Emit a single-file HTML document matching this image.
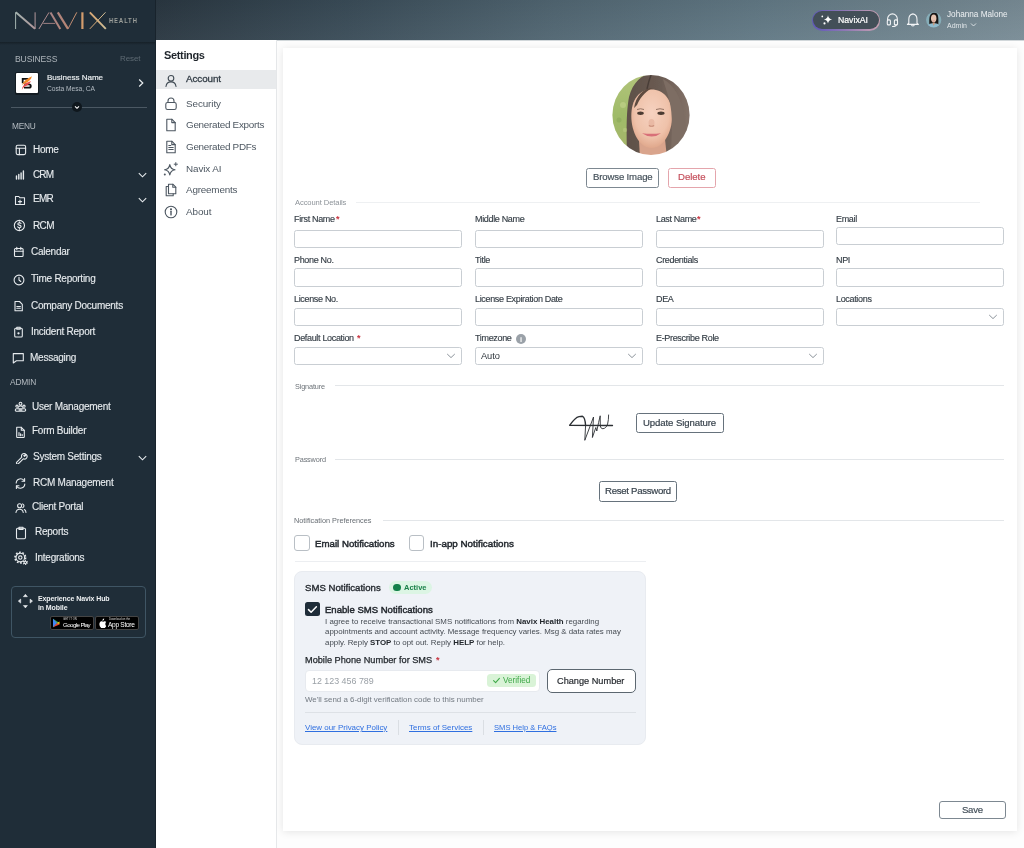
<!DOCTYPE html>
<html><head><meta charset="utf-8"><title>Settings - Account</title>
<style>
html,body{margin:0;padding:0;width:1024px;height:848px;overflow:hidden;background:#fdfdfd}
body{position:relative;font-family:"Liberation Sans",sans-serif}
.t{position:absolute;white-space:nowrap;will-change:transform;font-family:"Liberation Sans",sans-serif}
.b{position:absolute;display:block}
</style></head><body>
<div class="b" style="left:0px;top:0px;width:1024px;height:848px;background:#fdfdfd"></div>
<div class="b" style="left:0px;top:0px;width:156px;height:848px;background:#1f2d38"></div>
<div class="b" style="left:0px;top:42px;width:156px;height:3px;background:linear-gradient(#162028,#1f2d38)"></div>
<div class="b" style="left:155px;top:0px;width:1px;height:848px;background:#18232c"></div>
<svg class="b" style="left:0px;top:0px;" width="156" height="40" viewBox="0 0 156 40"><defs><linearGradient id="lg" x1="15" y1="0" x2="106" y2="0" gradientUnits="userSpaceOnUse">
<stop offset="0" stop-color="#a3b4b0"/><stop offset="0.22" stop-color="#b2979b"/><stop offset="0.4" stop-color="#a98384"/>
<stop offset="0.6" stop-color="#b98672"/><stop offset="0.74" stop-color="#d39c6c"/><stop offset="0.9" stop-color="#d8b07e"/><stop offset="1" stop-color="#cfc09a"/></linearGradient></defs><g fill="none" stroke="url(#lg)" stroke-linecap="butt">
<path d="M15.6 29V12.3" stroke-width="1"/><path d="M15.8 12.3L35 28.8" stroke-width="1.9"/><path d="M35.1 12.3V29" stroke-width="1"/>
<path d="M38.9 29L49 12.4" stroke-width="1"/><path d="M50.5 12.4L60.3 29" stroke-width="2"/><path d="M43.3 23.4H55.2" stroke-width="0.9"/>
<path d="M57.8 12.3L68 28.9" stroke-width="2.2"/><path d="M68 28.9L76.8 12.3" stroke-width="1"/>
<path d="M82.4 12.3V29" stroke-width="2.2"/>
<path d="M89.8 12.3L105.8 28.9" stroke-width="1.9"/><path d="M105.5 12.3L89.8 28.9" stroke-width="1"/>
</g></svg>
<div class="t" style="left:109.30px;top:17.95px;font-size:6.3px;line-height:6.3px;color:#9fa19c;font-weight:700;letter-spacing:1.05px;transform:scaleX(0.92);transform-origin:0 0">HEALTH</div>
<div class="t" style="left:14.50px;top:54.79px;font-size:8.6px;line-height:8.6px;color:#aeb5bb;font-weight:400;letter-spacing:-0.15px;">BUSINESS</div>
<div class="t" style="left:119.50px;top:55.30px;font-size:8px;line-height:8px;color:#5e6a73;font-weight:400;letter-spacing:-0.1px;">Reset</div>
<div class="b" style="left:15px;top:71.5px;width:24px;height:23.0px;background:#121b22;border-radius:2px"></div>
<div class="b" style="left:16px;top:73px;width:21.5px;height:20px;background:#fff;border-radius:1px"></div>
<svg class="b" style="left:16px;top:73px;" width="22" height="20" viewBox="0 0 22 20"><path d="M6.7 10.2V5.9H12.5" stroke="#111" stroke-width="1.8" fill="none"/>
<path d="M8.3 11.4H13c1.2 0 1.8.7 1.8 1.6s-.6 1.7-1.8 1.7H8" stroke="#111" stroke-width="1.8" fill="none"/>
<path d="M6.1 12.2C7.2 8.5 10.5 6 15.9 3.3 15.2 6.8 12.6 8.9 9 10.5 7.6 11.1 6.7 11.6 6.1 12.2Z" fill="#f28a28"/>
<path d="M5.9 17C6.1 12.8 8.8 10.4 14.9 8 14.2 10.8 11.8 12.2 8.8 13.4 7.4 14.2 6.4 15.5 5.9 17Z" fill="#ea4a4a"/></svg>
<div class="t" style="left:47.00px;top:74.21px;font-size:8.1px;line-height:8.1px;color:#eef1f3;font-weight:400;letter-spacing:-0.05px;-webkit-text-stroke:0.15px #eef1f3">Business Name</div>
<div class="t" style="left:47.00px;top:86.20px;font-size:6.7px;line-height:6.7px;color:#b3bbc2;font-weight:400;letter-spacing:-0.05px;">Costa Mesa, CA</div>
<svg class="b" style="left:136px;top:78px;" width="10" height="10" viewBox="0 0 10 10"><path d="M3.2 1.5L6.8 5 3.2 8.5" fill="none" stroke="#e8ecef" stroke-width="1.2"/></svg>
<div class="b" style="left:11px;top:106.5px;width:136px;height:1.5px;background:#4b5863"></div>
<div class="b" style="left:72px;top:102px;width:10px;height:10px;background:#0f171d;border-radius:50%"></div>
<svg class="b" style="left:72px;top:102px;" width="10" height="10" viewBox="0 0 10 10"><path d="M3 4.3L5 6.3 7 4.3" fill="none" stroke="#fff" stroke-width="1.1"/></svg>
<div class="t" style="left:12.30px;top:122.04px;font-size:8.3px;line-height:8.3px;color:#b4bbc1;font-weight:400;letter-spacing:-0.2px;">MENU</div>
<div class="t" style="left:33.40px;top:145.00px;font-size:10px;line-height:10px;color:#e7ebee;font-weight:400;letter-spacing:-0.25px;-webkit-text-stroke:0.12px #e7ebee">Home</div>
<div class="t" style="left:33.00px;top:169.90px;font-size:10px;line-height:10px;color:#e7ebee;font-weight:400;letter-spacing:-0.9px;-webkit-text-stroke:0.12px #e7ebee">CRM</div>
<div class="t" style="left:33.40px;top:194.10px;font-size:10px;line-height:10px;color:#e7ebee;font-weight:400;letter-spacing:-0.75px;-webkit-text-stroke:0.12px #e7ebee">EMR</div>
<div class="t" style="left:32.50px;top:220.50px;font-size:10px;line-height:10px;color:#e7ebee;font-weight:400;letter-spacing:-0.6px;-webkit-text-stroke:0.12px #e7ebee">RCM</div>
<div class="t" style="left:30.80px;top:247.30px;font-size:10px;line-height:10px;color:#e7ebee;font-weight:400;letter-spacing:-0.25px;-webkit-text-stroke:0.12px #e7ebee">Calendar</div>
<div class="t" style="left:30.80px;top:274.20px;font-size:10px;line-height:10px;color:#e7ebee;font-weight:400;letter-spacing:-0.25px;-webkit-text-stroke:0.12px #e7ebee">Time Reporting</div>
<div class="t" style="left:30.80px;top:301.00px;font-size:10px;line-height:10px;color:#e7ebee;font-weight:400;letter-spacing:-0.25px;-webkit-text-stroke:0.12px #e7ebee">Company Documents</div>
<div class="t" style="left:30.80px;top:327.10px;font-size:10px;line-height:10px;color:#e7ebee;font-weight:400;letter-spacing:-0.25px;-webkit-text-stroke:0.12px #e7ebee">Incident Report</div>
<div class="t" style="left:30.20px;top:352.90px;font-size:10px;line-height:10px;color:#e7ebee;font-weight:400;letter-spacing:-0.25px;-webkit-text-stroke:0.12px #e7ebee">Messaging</div>
<div class="t" style="left:32.00px;top:402.00px;font-size:10px;line-height:10px;color:#e7ebee;font-weight:400;letter-spacing:-0.25px;-webkit-text-stroke:0.12px #e7ebee">User Management</div>
<div class="t" style="left:32.00px;top:426.40px;font-size:10px;line-height:10px;color:#e7ebee;font-weight:400;letter-spacing:-0.25px;-webkit-text-stroke:0.12px #e7ebee">Form Builder</div>
<div class="t" style="left:32.60px;top:451.90px;font-size:10px;line-height:10px;color:#e7ebee;font-weight:400;letter-spacing:-0.25px;-webkit-text-stroke:0.12px #e7ebee">System Settings</div>
<div class="t" style="left:32.50px;top:477.70px;font-size:10px;line-height:10px;color:#e7ebee;font-weight:400;letter-spacing:-0.25px;-webkit-text-stroke:0.12px #e7ebee">RCM Management</div>
<div class="t" style="left:31.70px;top:502.30px;font-size:10px;line-height:10px;color:#e7ebee;font-weight:400;letter-spacing:-0.25px;-webkit-text-stroke:0.12px #e7ebee">Client Portal</div>
<div class="t" style="left:34.50px;top:527.40px;font-size:10px;line-height:10px;color:#e7ebee;font-weight:400;letter-spacing:-0.25px;-webkit-text-stroke:0.12px #e7ebee">Reports</div>
<div class="t" style="left:35.30px;top:553.20px;font-size:10px;line-height:10px;color:#e7ebee;font-weight:400;letter-spacing:-0.25px;-webkit-text-stroke:0.12px #e7ebee">Integrations</div>
<div class="t" style="left:10.40px;top:378.16px;font-size:8.4px;line-height:8.4px;color:#b4bbc1;font-weight:400;letter-spacing:-0.2px;">ADMIN</div>
<svg class="b" style="left:137px;top:171.2px;" width="11" height="8" viewBox="0 0 11 8"><path d="M1.8 2.2L5.5 5.8 9.2 2.2" fill="none" stroke="#e7ebee" stroke-width="1.1"/></svg>
<svg class="b" style="left:137px;top:195.8px;" width="11" height="8" viewBox="0 0 11 8"><path d="M1.8 2.2L5.5 5.8 9.2 2.2" fill="none" stroke="#e7ebee" stroke-width="1.1"/></svg>
<svg class="b" style="left:137px;top:453.5px;" width="11" height="8" viewBox="0 0 11 8"><path d="M1.8 2.2L5.5 5.8 9.2 2.2" fill="none" stroke="#e7ebee" stroke-width="1.1"/></svg>
<svg class="b" style="left:15px;top:144px;" width="12" height="12" viewBox="0 0 12 12"><g fill="none" stroke="#e7ebee" stroke-width="1.1" stroke-linecap="round" stroke-linejoin="round"><rect x="1.2" y="1.2" width="9.4" height="9.4" rx="1.5"/><path d="M1.2 4.3h9.4M4.4 4.3v6.3"/></g></svg>
<svg class="b" style="left:15px;top:169px;" width="11" height="11" viewBox="0 0 11 11"><g fill="none" stroke="#e7ebee" stroke-width="1.1" stroke-linecap="round" stroke-linejoin="round"><path d="M1.5 10V7M3.8 10V5.5M6.1 10V4M8.4 10V2" stroke-width="1.4"/></g></svg>
<svg class="b" style="left:14px;top:194px;" width="12" height="12" viewBox="0 0 12 12"><g fill="none" stroke="#e7ebee" stroke-width="1.1" stroke-linecap="round" stroke-linejoin="round"><path d="M1.5 2.5h3.3l1.2 1.3h4.5v6.7H1.5z"/><path d="M6 6v3.2M4.4 7.6h3.2"/></g></svg>
<svg class="b" style="left:13px;top:219px;" width="13" height="13" viewBox="0 0 13 13"><g fill="none" stroke="#e7ebee" stroke-width="1.1" stroke-linecap="round" stroke-linejoin="round"><circle cx="6.4" cy="6.5" r="5.1"/><path d="M8 4.6c-.3-.6-.9-.9-1.6-.9-.9 0-1.6.5-1.6 1.2 0 1.6 3.3.9 3.3 2.6 0 .7-.7 1.2-1.7 1.2-.8 0-1.4-.3-1.7-.9M6.4 2.9v1M6.4 9.2v1"/></g></svg>
<svg class="b" style="left:13px;top:246px;" width="12" height="12" viewBox="0 0 12 12"><g fill="none" stroke="#e7ebee" stroke-width="1.1" stroke-linecap="round" stroke-linejoin="round"><rect x="1.5" y="2.5" width="8.6" height="8" rx="1"/><path d="M1.5 5.2h8.6M3.8 1.2v2.3M7.8 1.2v2.3"/></g></svg>
<svg class="b" style="left:12.5px;top:274px;" width="12" height="12" viewBox="0 0 12 12"><g fill="none" stroke="#e7ebee" stroke-width="1.1" stroke-linecap="round" stroke-linejoin="round"><circle cx="6" cy="6" r="4.9"/><path d="M6 3.2V6l1.8 1.5"/></g></svg>
<svg class="b" style="left:13px;top:300px;" width="11" height="12" viewBox="0 0 11 12"><g fill="none" stroke="#e7ebee" stroke-width="1.1" stroke-linecap="round" stroke-linejoin="round"><path d="M2 1.5h4.5l2.8 2.8v6.5H2z"/><path d="M3.8 6.5h3.6M3.8 8.2h3.6"/></g></svg>
<svg class="b" style="left:13px;top:326px;" width="11" height="12" viewBox="0 0 11 12"><g fill="none" stroke="#e7ebee" stroke-width="1.1" stroke-linecap="round" stroke-linejoin="round"><rect x="1.7" y="2.3" width="7.6" height="8.7" rx="1"/><path d="M3.8 1.3h3.4v2H3.8z"/><circle cx="5.5" cy="7.3" r=".6" fill="#e7ebee"/></g></svg>
<svg class="b" style="left:11.5px;top:352px;" width="13" height="12" viewBox="0 0 13 12"><g fill="none" stroke="#e7ebee" stroke-width="1.1" stroke-linecap="round" stroke-linejoin="round"><path d="M1.3 1.6h10v7.2H4.4L1.3 11z"/></g></svg>
<svg class="b" style="left:14px;top:401px;" width="13" height="12" viewBox="0 0 13 12"><g fill="none" stroke="#e7ebee" stroke-width="1.1" stroke-linecap="round" stroke-linejoin="round"><circle cx="6.5" cy="2.7" r="1.4"/><path d="M4.3 6.2c.5-.9 1.2-1.3 2.2-1.3s1.7.4 2.2 1.3"/><circle cx="3" cy="5.2" r="1.1"/><circle cx="10" cy="5.2" r="1.1"/><rect x="1.3" y="7.7" width="10.4" height="2.6" rx="1.2"/><path d="M5.2 9h2.6" stroke-width="1.6"/></g></svg>
<svg class="b" style="left:15px;top:426px;" width="11" height="12" viewBox="0 0 11 12"><g fill="none" stroke="#e7ebee" stroke-width="1.1" stroke-linecap="round" stroke-linejoin="round"><path d="M1.7 1.3h4.6l3 3v6.5c0 .4-.3.7-.7.7H2.4c-.4 0-.7-.3-.7-.7z"/><path d="M6.3 1.3v3h3"/><path d="M4 6.5v3.3M5.6 7.7v2.1M7.2 8.6v1.2"/></g></svg>
<svg class="b" style="left:14.5px;top:452px;" width="13" height="12" viewBox="0 0 13 12"><g fill="none" stroke="#e7ebee" stroke-width="1.1" stroke-linecap="round" stroke-linejoin="round"><path d="M11 2.5c-.9-1.1-2.6-1.3-3.7-.3-.8.8-1 2-.5 3L1.8 10.1c-.5.5-.5 1.2 0 1.6.4.4 1.1.4 1.6 0l4.9-4.9c1 .5 2.2.3 3-.5 1-1 .9-2.6 0-3.6L9.6 4.4 8.8 3.6z"/></g></svg>
<svg class="b" style="left:14px;top:477px;" width="13" height="13" viewBox="0 0 13 13"><g fill="none" stroke="#e7ebee" stroke-width="1.1" stroke-linecap="round" stroke-linejoin="round"><path d="M2.2 6A4.4 4.4 0 0 1 10.4 4M10.8 7A4.4 4.4 0 0 1 2.6 9"/><path d="M10.6 1.6v2.6H8M2.4 11.4V8.8H5"/></g></svg>
<svg class="b" style="left:15px;top:502px;" width="12" height="12" viewBox="0 0 12 12"><g fill="none" stroke="#e7ebee" stroke-width="1.1" stroke-linecap="round" stroke-linejoin="round"><circle cx="4.6" cy="3.8" r="2"/><path d="M1 10.5c.2-2 1.6-3.3 3.6-3.3s3.4 1.3 3.6 3.3"/><path d="M7.6 1.9a2 2 0 0 1 0 3.8M9.4 7.6c1 .5 1.5 1.6 1.6 2.9"/></g></svg>
<svg class="b" style="left:15px;top:526px;" width="12" height="14" viewBox="0 0 12 14"><g fill="none" stroke="#e7ebee" stroke-width="1.1" stroke-linecap="round" stroke-linejoin="round"><rect x="1.5" y="2.3" width="9" height="10.5" rx="1.2"/><path d="M4 1.2h4v2.2H4z"/></g></svg>
<svg class="b" style="left:14px;top:551px;" width="15" height="15" viewBox="0 0 15 15"><g fill="none" stroke="#e7ebee" stroke-width="1.1" stroke-linecap="round" stroke-linejoin="round"><circle cx="6.3" cy="6.6" r="4.3"/><circle cx="6.3" cy="6.6" r="5.3" stroke-width="1.6" stroke-dasharray="1.7 1.6" stroke-linecap="butt"/><circle cx="6.3" cy="6.6" r="1.7"/><circle cx="11.3" cy="11.5" r="2.4" fill="#1f2d38" stroke="none"/><circle cx="11.3" cy="11.5" r="1.2"/><circle cx="11.3" cy="11.5" r="2" stroke-width="1.2" stroke-dasharray="1 1" stroke-linecap="butt"/></g></svg>
<div class="b" style="left:10.5px;top:586px;width:135.5px;height:52px;border:1px solid #3f5564;border-radius:4px;box-sizing:border-box"></div>
<svg class="b" style="left:17px;top:593px;" width="16" height="16" viewBox="0 0 16 16"><g fill="#e7ebee" stroke="#e7ebee" stroke-width="0.6" stroke-linejoin="round"><path d="M8.4 1.3l2 2.4H6.4z"/><path d="M8.4 14.9l2-2.4H6.4z"/><path d="M1.3 8.1l2.4-2v4z"/><path d="M15.5 8.1l-2.4-2v4z"/></g></svg>
<div class="t" style="left:37.50px;top:594.95px;font-size:7px;line-height:7px;color:#eef1f3;font-weight:700;letter-spacing:-0.1px;">Experience Navix Hub</div>
<div class="t" style="left:37.50px;top:603.75px;font-size:7px;line-height:7px;color:#eef1f3;font-weight:700;letter-spacing:-0.1px;">in Mobile</div>
<div class="b" style="left:49.5px;top:616px;width:44.0px;height:14px;background:#000;border:0.5px solid #444;border-radius:2px;box-sizing:border-box"></div>
<div class="b" style="left:95px;top:616px;width:44px;height:14px;background:#000;border:0.5px solid #444;border-radius:2px;box-sizing:border-box"></div>
<svg class="b" style="left:52px;top:618px;" width="9" height="10" viewBox="0 0 9 10"><path d="M1 .8l6.5 4.2L1 9.2z" fill="#34a853"/><path d="M1 .8l4 4.2-4 4.2z" fill="#4285f4"/><path d="M1 9.2l4-4.2 2.5 1.6z" fill="#ea4335"/><path d="M5 5l2.5-1.6L7.5 6.6z" fill="#fbbc04"/></svg>
<div class="t" style="left:63.00px;top:618.02px;font-size:2.8px;line-height:2.8px;color:#ddd;font-weight:400;letter-spacing:0px;">GET IT ON</div>
<div class="t" style="left:62.60px;top:622.03px;font-size:6.2px;line-height:6.2px;color:#fff;font-weight:400;letter-spacing:-0.6px;">Google Play</div>
<svg class="b" style="left:98px;top:618px;" width="9" height="10" viewBox="0 0 9 10"><path d="M6.2 .6c-.6 0-1.2.4-1.5.9-.3.4-.4.9-.3 1.3.6 0 1.1-.3 1.4-.8.3-.4.4-.9.4-1.4zM7.4 5.6c0-1 .8-1.5.9-1.5-.5-.7-1.2-.8-1.5-.8-.6-.1-1.2.4-1.6.4-.3 0-.8-.4-1.4-.4C3 3.3 2.2 3.8 1.8 4.6c-.8 1.4-.2 3.4.6 4.5.4.5.8 1.1 1.3 1.1s.7-.3 1.3-.3.8.3 1.3.3c.6 0 .9-.5 1.3-1.1.4-.6.6-1.2.6-1.2s-.8-.4-.8-1.4z" fill="#fff"/></svg>
<div class="t" style="left:108.50px;top:618.02px;font-size:2.8px;line-height:2.8px;color:#ddd;font-weight:400;letter-spacing:0px;">Download on the</div>
<div class="t" style="left:108.00px;top:621.69px;font-size:6.6px;line-height:6.6px;color:#fff;font-weight:400;letter-spacing:-0.3px;">App Store</div>
<div class="b" style="left:156px;top:0px;width:868px;height:40px;background:linear-gradient(180deg,rgba(0,0,0,0.05),rgba(255,255,255,0.035)),linear-gradient(90deg,#2a3741 0%,#3a4c58 22%,#516672 46%,#627985 70%,#71858f 90%,#798c96 100%)"></div>
<div class="b" style="left:156px;top:40px;width:868px;height:1px;background:rgba(110,130,140,0.3)"></div>
<div class="b" style="left:812px;top:10px;width:68px;height:20.5px;border-radius:11px;background:linear-gradient(90deg,#5e57b8,#8f79b4 50%,#c9a2b2);padding:1px;box-sizing:border-box"></div>
<div class="b" style="left:813.2px;top:11.2px;width:65.59999999999991px;height:18.1px;border-radius:10px;background:#434f58"></div>
<svg class="b" style="left:819px;top:13px;" width="15" height="14" viewBox="0 0 15 14"><path d="M9 2.3c.45 2.6 1.5 3.65 4.1 4.1-2.6.45-3.65 1.5-4.1 4.1-.45-2.6-1.5-3.65-4.1-4.1 2.6-.45 3.65-1.5 4.1-4.1z" fill="#fff"/><circle cx="3.3" cy="3.4" r=".85" fill="#fff"/><circle cx="5.5" cy="10.4" r="1.05" fill="#fff"/></svg>
<div class="t" style="left:837.70px;top:15.60px;font-size:8.7px;line-height:8.7px;color:#ffffff;font-weight:400;letter-spacing:0px;-webkit-text-stroke:0.2px #fff">NavixAI</div>
<svg class="b" style="left:885px;top:12px;" width="15" height="16" viewBox="0 0 15 16"><g fill="none" stroke="#f2f4f6" stroke-width="1.1" stroke-linecap="round"><path d="M2.6 8.6V6.7a4.85 4.85 0 0 1 9.7 0v1.9"/><rect x="2.3" y="7.9" width="3.1" height="5" rx="1"/><rect x="9.4" y="7.9" width="3.1" height="5" rx="1"/><path d="M11.2 12.9c0 1-.9 1.6-3.7 1.6"/></g></svg>
<svg class="b" style="left:905px;top:12px;" width="16" height="16" viewBox="0 0 16 16"><g fill="none" stroke="#f2f4f6" stroke-width="1.1" stroke-linejoin="round"><path d="M3.8 11.2V7.4C3.8 4.6 5.6 2.3 7.9 1.9 10.2 2.3 12 4.6 12 7.4v3.8l1.4 1.2H2.4z"/><path d="M6.5 12.6a1.4 1.4 0 0 0 2.8 0"/></g></svg>
<svg class="b" style="left:925.5px;top:12.2px;" width="16" height="16" viewBox="0 0 16 16"><defs><clipPath id="ua"><circle cx="7.7" cy="7.9" r="7.6"/></clipPath><filter id="ub"><feGaussianBlur stdDeviation="0.35"/></filter></defs><g clip-path="url(#ua)"><g filter="url(#ub)"><rect x="-1" y="-1" width="18" height="18" fill="#86adb8"/><path d="M3.5 14C3.2 9 3 4 5 2 6.5 0.4 9 0.3 10.6 1.3 12.5 2.8 12.6 7 12.3 14z" fill="#191513"/><path d="M0 16.5C1 12.5 4 11.2 7.7 11.2s6.7 1.3 7.7 5.3z" fill="#8fbcd0"/><path d="M6.3 10.5L7.7 14 9.2 10.5z" fill="#c99a80"/><ellipse cx="7.7" cy="6.3" rx="2.7" ry="3.9" fill="#e6c3b0"/><path d="M6.8 8.8q.9.5 1.8 0" stroke="#c77" stroke-width=".6" fill="none"/></g></g></svg>
<div class="t" style="left:947.00px;top:11.13px;font-size:8.2px;line-height:8.2px;color:#eef1f3;font-weight:400;letter-spacing:0px;">Johanna Malone</div>
<div class="t" style="left:947.00px;top:21.65px;font-size:7px;line-height:7px;color:#e2e7ea;font-weight:400;letter-spacing:0px;">Admin</div>
<svg class="b" style="left:969px;top:22px;" width="9" height="6" viewBox="0 0 9 6"><path d="M2 1.5l2.5 2.5L7 1.5" fill="none" stroke="#e2e7ea" stroke-width="0.9"/></svg>
<div class="b" style="left:156px;top:40px;width:120px;height:808px;background:#fff"></div>
<div class="b" style="left:275.5px;top:40px;width:1.5px;height:808px;background:#e6e8ea"></div>
<div class="t" style="left:164.20px;top:49.75px;font-size:11px;line-height:11px;color:#1f252b;font-weight:700;letter-spacing:-0.35px;">Settings</div>
<div class="b" style="left:156px;top:70px;width:119.5px;height:19px;background:#e8eaec"></div>
<svg class="b" style="left:164px;top:74px;" width="14" height="14" viewBox="0 0 14 14"><g fill="none" stroke="#3f4a53" stroke-width="1.1" stroke-linecap="round" stroke-linejoin="round"><circle cx="7" cy="4.3" r="2.8"/><path d="M2 12.5c.4-3 2.4-4.6 5-4.6s4.6 1.6 5 4.6"/></g></svg>
<div class="t" style="left:186.00px;top:74.48px;font-size:9.9px;line-height:9.9px;color:#333d46;font-weight:400;letter-spacing:-0.1px;-webkit-text-stroke:0.3px #333d46">Account</div>
<svg class="b" style="left:164px;top:96px;" width="14" height="15" viewBox="0 0 14 15"><g fill="none" stroke="#4d5761" stroke-width="1.1" stroke-linecap="round" stroke-linejoin="round"><rect x="1.8" y="6.5" width="10.4" height="7" rx="1.8"/><path d="M4 6.5V5a3 3 0 0 1 6 0v1.5"/></g></svg>
<div class="t" style="left:185.75px;top:98.68px;font-size:9.9px;line-height:9.9px;color:#4d5761;font-weight:400;letter-spacing:-0.1px;">Security</div>
<svg class="b" style="left:164px;top:118px;" width="14" height="14" viewBox="0 0 14 14"><g fill="none" stroke="#4d5761" stroke-width="1.1" stroke-linecap="round" stroke-linejoin="round"><path d="M2.8 1.2h5l3.4 3.4v8.2H2.8z"/><path d="M7.8 1.2v3.4h3.4"/></g></svg>
<div class="t" style="left:185.75px;top:120.48px;font-size:9.9px;line-height:9.9px;color:#4d5761;font-weight:400;letter-spacing:-0.28px;">Generated Exports</div>
<svg class="b" style="left:164px;top:140px;" width="14" height="14" viewBox="0 0 14 14"><g fill="none" stroke="#4d5761" stroke-width="1.1" stroke-linecap="round" stroke-linejoin="round"><path d="M2.8 1.2h5l3.4 3.4v8.2H2.8z"/><path d="M7.8 1.2v3.4h3.4M4.8 7.5h4.4M4.8 9.5h4.4M4.8 5.5h2"/></g></svg>
<div class="t" style="left:185.75px;top:141.99px;font-size:9.9px;line-height:9.9px;color:#4d5761;font-weight:400;letter-spacing:-0.28px;">Generated PDFs</div>
<svg class="b" style="left:163px;top:161px;" width="16" height="16" viewBox="0 0 16 16"><g fill="none" stroke="#4d5761" stroke-width="1.1" stroke-linecap="round" stroke-linejoin="round"><path d="M6.8 3.6c.55 3.3 1.9 4.7 5.2 5.2-3.3.55-4.65 1.9-5.2 5.2-.55-3.3-1.9-4.65-5.2-5.2 3.3-.5 4.65-1.9 5.2-5.2z" stroke-width="1.15"/><path d="M12.8 1.6v3.2M11.2 3.2h3.2" stroke-width="1"/><circle cx="1.8" cy="13.6" r=".45" fill="#4d5761"/></g></svg>
<div class="t" style="left:185.75px;top:163.78px;font-size:9.9px;line-height:9.9px;color:#4d5761;font-weight:400;letter-spacing:-0.1px;">Navix AI</div>
<svg class="b" style="left:164px;top:183px;" width="14" height="14" viewBox="0 0 14 14"><g fill="none" stroke="#4d5761" stroke-width="1.1" stroke-linecap="round" stroke-linejoin="round"><path d="M4.5 1.2h4.3l3 3v6.6H4.5z"/><path d="M8.8 1.2v3h3"/><path d="M4.5 3.5H2.2v9.3h7v-2"/></g></svg>
<div class="t" style="left:185.75px;top:185.49px;font-size:9.9px;line-height:9.9px;color:#4d5761;font-weight:400;letter-spacing:-0.2px;">Agreements</div>
<svg class="b" style="left:164px;top:205px;" width="14" height="14" viewBox="0 0 14 14"><g fill="none" stroke="#4d5761" stroke-width="1.1" stroke-linecap="round" stroke-linejoin="round"><circle cx="7" cy="7" r="5.8"/><path d="M7 6.3v3.6" stroke-width="1.4"/><circle cx="7" cy="4.3" r=".5" fill="#4d5761"/></g></svg>
<div class="t" style="left:185.75px;top:207.28px;font-size:9.9px;line-height:9.9px;color:#4d5761;font-weight:400;letter-spacing:-0.1px;">About</div>
<div class="b" style="left:283px;top:48px;width:734px;height:783px;background:#fff;box-shadow:0 1px 8px rgba(0,0,0,0.10)"></div>
<svg class="b" style="left:611px;top:75px;" width="80" height="81" viewBox="0 0 80 81"><defs><clipPath id="av"><ellipse cx="40" cy="40" rx="38.6" ry="40"/></clipPath>
<linearGradient id="bgg" x1="0" y1="0" x2="0" y2="1"><stop offset="0" stop-color="#b3c47c"/><stop offset="0.5" stop-color="#9fbb68"/><stop offset="1" stop-color="#a8b46c"/></linearGradient>
<linearGradient id="hr" x1="0" y1="0" x2="1" y2="0"><stop offset="0" stop-color="#5e5048"/><stop offset="0.5" stop-color="#6a5b52"/><stop offset="1" stop-color="#85746a"/></linearGradient>
<radialGradient id="sk" cx="0.5" cy="0.4" r="0.6"><stop offset="0" stop-color="#f6d2c0"/><stop offset="0.7" stop-color="#efc2aa"/><stop offset="1" stop-color="#e0a88c"/></radialGradient>
<filter id="sf"><feGaussianBlur stdDeviation="0.5"/></filter></defs>
<g clip-path="url(#av)"><g filter="url(#sf)">
<rect x="-2" y="-2" width="84" height="85" fill="url(#bgg)"/>
<path d="M16 83C15.5 60 15 38 18 22 22 7 31 -1 41 -1 60 -1 82 4 82 18V83z" fill="url(#hr)"/>
<path d="M28 66L29 83H56L54 64z" fill="#d9a48c"/>
<path d="M20.3 41C20.3 24 28.5 14.5 40.5 14.5 52.5 14.5 61.2 24 61.2 41 61.2 57 52.5 73 40.5 73 28.5 73 20.3 57 20.3 41Z" fill="url(#sk)"/>
<path d="M52 4C63 10 70 22 73 40 75 55 77 70 82 83H60C60 62 63 42 58 24 56 16 53 9 52 4Z" fill="#7d6d63"/><path d="M40 0C38 5 37 9 36 14" stroke="#4a3e38" stroke-width="1.5" fill="none"/><circle cx="12" cy="30" r="3" fill="#c5d48e" opacity=".6"/><circle cx="8" cy="45" r="2.5" fill="#8aa858" opacity=".6"/><circle cx="14" cy="55" r="2.2" fill="#c0cf88" opacity=".5"/>
<path d="M23 33C25 21 32 13 42 13 36 15 30 21 26 30z" fill="#5e4c40"/>
<path d="M26 34.5q3.5-1.5 7 0M45 34.5q4-1.5 8 0" stroke="#8a6a5a" stroke-width="0.9" fill="none"/>
<ellipse cx="29.5" cy="38.3" rx="3.3" ry="1.7" fill="#4b3a30"/>
<ellipse cx="50" cy="38.3" rx="3.6" ry="1.7" fill="#4b3a30"/>
<ellipse cx="40.5" cy="48" rx="3" ry="4" fill="#e2ae98" opacity=".6"/><path d="M37.8 50.5q2.7 1.6 5.4 0" stroke="#c98e7a" stroke-width="1.1" fill="none"/>
<path d="M31 58.2Q40.5 59.5 50 58.2Q41 65 31 58.2Z" fill="#d86f78"/>
</g></g></svg>
<div class="b" style="left:586px;top:168px;width:73px;height:20px;border:1px solid #7d8891;border-radius:2.5px;box-sizing:border-box;background:#fff"></div>
<div class="t" style="left:592.90px;top:172.44px;font-size:9.6px;line-height:9.6px;color:#44505a;font-weight:400;letter-spacing:-0.15px;-webkit-text-stroke:0.18px #44505a">Browse Image</div>
<div class="b" style="left:668px;top:168px;width:47.5px;height:20px;border:1px solid #e4a5ac;border-radius:2.5px;box-sizing:border-box;background:#fff"></div>
<div class="t" style="left:677.80px;top:172.44px;font-size:9.6px;line-height:9.6px;color:#c44e5b;font-weight:400;letter-spacing:-0.05px;-webkit-text-stroke:0.18px #c44e5b">Delete</div>
<div class="t" style="left:294.60px;top:198.84px;font-size:7.6px;line-height:7.6px;color:#8d9399;font-weight:400;letter-spacing:-0.1px;">Account Details</div>
<div class="b" style="left:356px;top:202px;width:624px;height:1px;background:#eef0f2"></div>
<div class="t" style="left:294.30px;top:215.05px;font-size:9px;line-height:9px;color:#353e46;font-weight:400;letter-spacing:-0.33px;-webkit-text-stroke:0.15px #353e46">First Name</div>
<div class="t" style="left:335.60px;top:215.05px;font-size:9px;line-height:9px;color:#c8333f;font-weight:700;letter-spacing:0px;">*</div>
<div class="b" style="left:294.3px;top:229.7px;width:168.0px;height:18.30000000000001px;border:1px solid #c9ced3;border-radius:2.5px;box-sizing:border-box;background:#fff"></div>
<div class="t" style="left:475.30px;top:215.05px;font-size:9px;line-height:9px;color:#353e46;font-weight:400;letter-spacing:-0.33px;-webkit-text-stroke:0.15px #353e46">Middle Name</div>
<div class="b" style="left:475.3px;top:229.7px;width:167.99999999999994px;height:18.30000000000001px;border:1px solid #c9ced3;border-radius:2.5px;box-sizing:border-box;background:#fff"></div>
<div class="t" style="left:655.50px;top:215.05px;font-size:9px;line-height:9px;color:#353e46;font-weight:400;letter-spacing:-0.33px;-webkit-text-stroke:0.15px #353e46">Last Name</div>
<div class="t" style="left:696.50px;top:215.05px;font-size:9px;line-height:9px;color:#c8333f;font-weight:700;letter-spacing:0px;">*</div>
<div class="b" style="left:655.5px;top:229.7px;width:168.0px;height:18.30000000000001px;border:1px solid #c9ced3;border-radius:2.5px;box-sizing:border-box;background:#fff"></div>
<div class="t" style="left:836.20px;top:215.05px;font-size:9px;line-height:9px;color:#353e46;font-weight:400;letter-spacing:-0.33px;-webkit-text-stroke:0.15px #353e46">Email</div>
<div class="b" style="left:836.2px;top:227.3px;width:168.0px;height:18.19999999999999px;border:1px solid #c9ced3;border-radius:2.5px;box-sizing:border-box;background:#fff"></div>
<div class="t" style="left:294.30px;top:256.25px;font-size:9px;line-height:9px;color:#353e46;font-weight:400;letter-spacing:-0.33px;-webkit-text-stroke:0.15px #353e46">Phone No.</div>
<div class="b" style="left:294.3px;top:268.3px;width:168.0px;height:18.399999999999977px;border:1px solid #c9ced3;border-radius:2.5px;box-sizing:border-box;background:#fff"></div>
<div class="t" style="left:475.30px;top:256.25px;font-size:9px;line-height:9px;color:#353e46;font-weight:400;letter-spacing:-0.33px;-webkit-text-stroke:0.15px #353e46">Title</div>
<div class="b" style="left:475.3px;top:268.3px;width:167.99999999999994px;height:18.399999999999977px;border:1px solid #c9ced3;border-radius:2.5px;box-sizing:border-box;background:#fff"></div>
<div class="t" style="left:655.50px;top:256.25px;font-size:9px;line-height:9px;color:#353e46;font-weight:400;letter-spacing:-0.33px;-webkit-text-stroke:0.15px #353e46">Credentials</div>
<div class="b" style="left:655.5px;top:268.3px;width:168.0px;height:18.399999999999977px;border:1px solid #c9ced3;border-radius:2.5px;box-sizing:border-box;background:#fff"></div>
<div class="t" style="left:836.20px;top:256.25px;font-size:9px;line-height:9px;color:#353e46;font-weight:400;letter-spacing:-0.33px;-webkit-text-stroke:0.15px #353e46">NPI</div>
<div class="b" style="left:836.2px;top:268.3px;width:168.0px;height:18.399999999999977px;border:1px solid #c9ced3;border-radius:2.5px;box-sizing:border-box;background:#fff"></div>
<div class="t" style="left:294.30px;top:295.05px;font-size:9px;line-height:9px;color:#353e46;font-weight:400;letter-spacing:-0.33px;-webkit-text-stroke:0.15px #353e46">License No.</div>
<div class="b" style="left:294.3px;top:307.5px;width:168.0px;height:18.5px;border:1px solid #c9ced3;border-radius:2.5px;box-sizing:border-box;background:#fff"></div>
<div class="t" style="left:475.30px;top:295.05px;font-size:9px;line-height:9px;color:#353e46;font-weight:400;letter-spacing:-0.33px;-webkit-text-stroke:0.15px #353e46">License Expiration Date</div>
<div class="b" style="left:475.3px;top:307.5px;width:167.99999999999994px;height:18.5px;border:1px solid #c9ced3;border-radius:2.5px;box-sizing:border-box;background:#fff"></div>
<div class="t" style="left:655.50px;top:295.05px;font-size:9px;line-height:9px;color:#353e46;font-weight:400;letter-spacing:-0.33px;-webkit-text-stroke:0.15px #353e46">DEA</div>
<div class="b" style="left:655.5px;top:307.5px;width:168.0px;height:18.5px;border:1px solid #c9ced3;border-radius:2.5px;box-sizing:border-box;background:#fff"></div>
<div class="t" style="left:836.20px;top:295.05px;font-size:9px;line-height:9px;color:#353e46;font-weight:400;letter-spacing:-0.33px;-webkit-text-stroke:0.15px #353e46">Locations</div>
<div class="b" style="left:836.2px;top:307.5px;width:168.0px;height:18.5px;border:1px solid #c9ced3;border-radius:2.5px;box-sizing:border-box;background:#fff"></div>
<svg class="b" style="left:988.2px;top:313.75px;" width="10" height="6" viewBox="0 0 10 6"><path d="M1.2 1L5 4.6 8.8 1" fill="none" stroke="#7f878e" stroke-width="0.9"/></svg>
<div class="t" style="left:294.30px;top:333.95px;font-size:9px;line-height:9px;color:#353e46;font-weight:400;letter-spacing:-0.33px;-webkit-text-stroke:0.15px #353e46">Default Location</div>
<div class="t" style="left:356.80px;top:333.95px;font-size:9px;line-height:9px;color:#c8333f;font-weight:700;letter-spacing:0px;">*</div>
<div class="b" style="left:294.3px;top:347px;width:168.0px;height:18px;border:1px solid #c9ced3;border-radius:2.5px;box-sizing:border-box;background:#fff"></div>
<svg class="b" style="left:446.3px;top:353.0px;" width="10" height="6" viewBox="0 0 10 6"><path d="M1.2 1L5 4.6 8.8 1" fill="none" stroke="#7f878e" stroke-width="0.9"/></svg>
<div class="t" style="left:475.30px;top:333.95px;font-size:9px;line-height:9px;color:#353e46;font-weight:400;letter-spacing:-0.33px;-webkit-text-stroke:0.15px #353e46">Timezone</div>
<div class="b" style="left:515.8px;top:333.8px;width:10.5px;height:10.5px;background:#9aa1a8;border-radius:50%"></div>
<div class="t" style="left:520.10px;top:336.03px;font-size:7.5px;line-height:7.5px;color:#fff;font-weight:700;letter-spacing:0px;">i</div>
<div class="b" style="left:475.3px;top:347px;width:167.99999999999994px;height:18px;border:1px solid #c9ced3;border-radius:2.5px;box-sizing:border-box;background:#fff"></div>
<svg class="b" style="left:627.3px;top:353.0px;" width="10" height="6" viewBox="0 0 10 6"><path d="M1.2 1L5 4.6 8.8 1" fill="none" stroke="#7f878e" stroke-width="0.9"/></svg>
<div class="t" style="left:481.00px;top:351.70px;font-size:9.3px;line-height:9.3px;color:#2f363d;font-weight:400;letter-spacing:-0.1px;">Auto</div>
<div class="t" style="left:655.50px;top:333.95px;font-size:9px;line-height:9px;color:#353e46;font-weight:400;letter-spacing:-0.33px;-webkit-text-stroke:0.15px #353e46">E-Prescribe Role</div>
<div class="b" style="left:655.5px;top:347px;width:168.0px;height:18px;border:1px solid #c9ced3;border-radius:2.5px;box-sizing:border-box;background:#fff"></div>
<svg class="b" style="left:807.5px;top:353.0px;" width="10" height="6" viewBox="0 0 10 6"><path d="M1.2 1L5 4.6 8.8 1" fill="none" stroke="#7f878e" stroke-width="0.9"/></svg>
<div class="t" style="left:294.70px;top:382.60px;font-size:7.3px;line-height:7.3px;color:#6d7379;font-weight:400;letter-spacing:-0.15px;">Signature</div>
<div class="b" style="left:335px;top:384.5px;width:669px;height:1.0px;background:#e3e6e9"></div>
<svg class="b" style="left:564px;top:410px;" width="54" height="36" viewBox="0 0 54 36"><g fill="none" stroke="#2b2f33" stroke-linecap="round" stroke-linejoin="round"><path d="M5.8 15.3L48.5 15.5" stroke-width="1.3"/><path d="M5.8 15.2C9 10.5 12 7.2 15 6.6L18.5 6.3C20.5 7 21.3 11 21.6 15.5" stroke-width="1.4"/><path d="M21.6 15.5L20.8 30.3L29.5 7L28.4 27.5L31.8 17.5L32.8 21L34.6 12.5L36.2 5.8L36.3 15.5C36.6 18 37.5 18.8 39 18.7C41 18.5 42.6 17 43.6 14C44.4 11 44.6 8 44.6 5" stroke-width="0.9"/></g></svg>
<div class="b" style="left:636.4px;top:413.2px;width:87.39999999999998px;height:20.19999999999999px;border:1px solid #66727c;border-radius:2.5px;box-sizing:border-box;background:#fff"></div>
<div class="t" style="left:643.00px;top:418.14px;font-size:9.6px;line-height:9.6px;color:#36414b;font-weight:400;letter-spacing:-0.1px;-webkit-text-stroke:0.18px #36414b">Update Signature</div>
<div class="t" style="left:294.70px;top:456.10px;font-size:7.3px;line-height:7.3px;color:#6d7379;font-weight:400;letter-spacing:-0.15px;">Password</div>
<div class="b" style="left:335px;top:458.5px;width:669px;height:1.0px;background:#e3e6e9"></div>
<div class="b" style="left:599px;top:481.2px;width:78.39999999999998px;height:20.400000000000034px;border:1px solid #66727c;border-radius:2.5px;box-sizing:border-box;background:#fff"></div>
<div class="t" style="left:605.30px;top:485.94px;font-size:9.6px;line-height:9.6px;color:#36414b;font-weight:400;letter-spacing:-0.28px;-webkit-text-stroke:0.18px #36414b">Reset Password</div>
<div class="t" style="left:294.25px;top:517.29px;font-size:7.3px;line-height:7.3px;color:#676d73;font-weight:400;letter-spacing:0px;">Notification Preferences</div>
<div class="b" style="left:383px;top:520px;width:621px;height:1px;background:#e3e6e9"></div>
<div class="b" style="left:294.25px;top:535.1px;width:15.550000000000011px;height:15.699999999999932px;border:1px solid #b9bfc5;border-radius:3px;box-sizing:border-box;background:#fff"></div>
<div class="t" style="left:315.00px;top:538.65px;font-size:9.7px;line-height:9.7px;color:#23282e;font-weight:400;letter-spacing:0px;-webkit-text-stroke:0.45px #23282e">Email Notifications</div>
<div class="b" style="left:408.5px;top:535.1px;width:15.5px;height:15.699999999999932px;border:1px solid #b9bfc5;border-radius:3px;box-sizing:border-box;background:#fff"></div>
<div class="t" style="left:429.50px;top:538.57px;font-size:9.8px;line-height:9.8px;color:#23282e;font-weight:400;letter-spacing:0px;-webkit-text-stroke:0.45px #23282e">In-app Notifications</div>
<div class="b" style="left:294.5px;top:560.5px;width:351.0px;height:1.0px;background:#eceef1"></div>
<div class="b" style="left:294.2px;top:571.2px;width:351.40000000000003px;height:174.0px;background:#eff2f7;border-radius:8px;border:0.5px solid #e8ebf0;box-sizing:border-box"></div>
<div class="t" style="left:304.90px;top:583.24px;font-size:9.6px;line-height:9.6px;color:#23282e;font-weight:400;letter-spacing:0px;-webkit-text-stroke:0.35px #23282e">SMS Notifications</div>
<div class="b" style="left:388.5px;top:581.4px;width:43.0px;height:12.300000000000068px;background:#dcf5e4;border-radius:7px"></div>
<div class="b" style="left:393.4px;top:583.9px;width:7.400000000000034px;height:7.399999999999977px;background:#138049;border-radius:50%"></div>
<div class="t" style="left:403.50px;top:584.33px;font-size:7.5px;line-height:7.5px;color:#1b8049;font-weight:700;letter-spacing:0px;">Active</div>
<div class="b" style="left:304.9px;top:601.9px;width:14.800000000000011px;height:14.600000000000023px;background:#1f2d39;border-radius:2.5px"></div>
<svg class="b" style="left:304.9px;top:601.9px;" width="15" height="15" viewBox="0 0 15 15"><path d="M3.5 7.6l2.6 2.6 5.3-5.5" fill="none" stroke="#fff" stroke-width="1.5" stroke-linecap="round" stroke-linejoin="round"/></svg>
<div class="t" style="left:325.40px;top:605.18px;font-size:9.55px;line-height:9.55px;color:#23282e;font-weight:400;letter-spacing:0px;-webkit-text-stroke:0.45px #23282e">Enable SMS Notifications</div>
<div class="t" style="left:325.40px;top:618.38px;font-size:7.9px;line-height:7.9px;color:#454b52;font-weight:400;letter-spacing:0px;">I agree to receive transactional SMS notifications from <b style="color:#22272c">Navix Health</b> regarding</div>
<div class="t" style="left:325.40px;top:628.49px;font-size:7.9px;line-height:7.9px;color:#454b52;font-weight:400;letter-spacing:0px;">appointments and account activity. Message frequency varies. Msg &amp; data rates may</div>
<div class="t" style="left:325.40px;top:638.59px;font-size:7.9px;line-height:7.9px;color:#454b52;font-weight:400;letter-spacing:0px;">apply. Reply <b style="color:#22272c">STOP</b> to opt out. Reply <b style="color:#22272c">HELP</b> for help.</div>
<div class="t" style="left:304.80px;top:656.28px;font-size:9.2px;line-height:9.2px;color:#1f2429;font-weight:400;letter-spacing:0px;-webkit-text-stroke:0.25px #1f2429">Mobile Phone Number for SMS</div>
<div class="t" style="left:435.50px;top:656.45px;font-size:9px;line-height:9px;color:#c8333f;font-weight:700;letter-spacing:0px;">*</div>
<div class="b" style="left:305px;top:669.8px;width:234.70000000000005px;height:21.90000000000009px;background:#fff;border:1px solid #e7eaef;border-radius:4px;box-sizing:border-box"></div>
<div class="t" style="left:312.20px;top:676.53px;font-size:8.9px;line-height:8.9px;color:#9aa0a6;font-weight:400;letter-spacing:0px;">12 123 456 789</div>
<div class="b" style="left:487.3px;top:674.1px;width:48.30000000000001px;height:12.699999999999932px;background:#d9f3d7;border-radius:3.5px"></div>
<svg class="b" style="left:492px;top:676px;" width="9" height="9" viewBox="0 0 9 9"><path d="M1.6 4.6l2 2 3.8-4.2" fill="none" stroke="#3fa94a" stroke-width="1.1" stroke-linecap="round" stroke-linejoin="round"/></svg>
<div class="t" style="left:502.60px;top:677.13px;font-size:8.2px;line-height:8.2px;color:#3ea849;font-weight:400;letter-spacing:0px;">Verified</div>
<div class="b" style="left:546.5px;top:669px;width:89.29999999999995px;height:23.5px;border:1.2px solid #5c6770;border-radius:5px;box-sizing:border-box;background:#fff"></div>
<div class="t" style="left:557.00px;top:677.18px;font-size:9.2px;line-height:9.2px;color:#1f2328;font-weight:400;letter-spacing:0px;-webkit-text-stroke:0.18px #1f2328">Change Number</div>
<div class="t" style="left:304.80px;top:695.84px;font-size:7.95px;line-height:7.95px;color:#737a82;font-weight:400;letter-spacing:0px;">We&#39;ll send a 6-digit verification code to this number</div>
<div class="b" style="left:304.8px;top:712px;width:330.99999999999994px;height:1px;background:#dde1e6"></div>
<div class="t" style="left:304.80px;top:724.04px;font-size:7.95px;line-height:7.95px;color:#2f6fe0;font-weight:400;letter-spacing:0px;text-decoration:underline;text-underline-offset:1px">View our Privacy Policy</div>
<div class="b" style="left:398px;top:720px;width:1px;height:15px;background:#dadee3"></div>
<div class="t" style="left:408.70px;top:724.02px;font-size:7.98px;line-height:7.98px;color:#2f6fe0;font-weight:400;letter-spacing:0px;text-decoration:underline;text-underline-offset:1px">Terms of Services</div>
<div class="b" style="left:483px;top:720px;width:1px;height:15px;background:#dadee3"></div>
<div class="t" style="left:493.60px;top:724.34px;font-size:7.6px;line-height:7.6px;color:#2f6fe0;font-weight:400;letter-spacing:0px;text-decoration:underline;text-underline-offset:1px">SMS Help &amp; FAQs</div>
<div class="b" style="left:938.5px;top:800.8px;width:67.79999999999995px;height:18.40000000000009px;border:1px solid #7d8891;border-radius:3px;box-sizing:border-box;background:#fff"></div>
<div class="t" style="left:962.40px;top:804.84px;font-size:9.6px;line-height:9.6px;color:#44505a;font-weight:400;letter-spacing:-0.3px;-webkit-text-stroke:0.18px #44505a">Save</div>
</body></html>
